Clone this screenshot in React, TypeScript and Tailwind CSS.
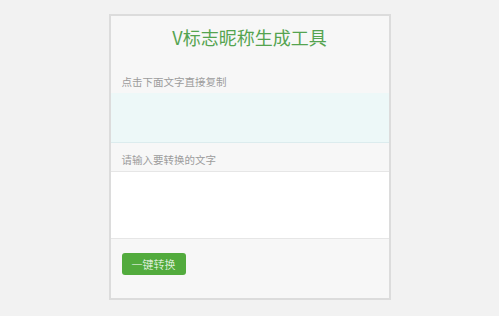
export default function App() {
  return (
    <div
      className="min-h-screen bg-[#f2f2f2] pt-[14px]"
      style={{ fontFamily: '"Noto Sans CJK SC", "Noto Sans", sans-serif' }}
    >
      <div className="mx-auto flex h-[286px] w-[282px] flex-col border-2 border-[#dcdcdc] bg-[#f7f7f7]">
        <div className="flex h-[42px] items-center justify-center text-[18px] leading-none text-[#55a450]">
          V标志昵称生成工具
        </div>
        <div className="flex h-[35px] items-end pb-[3px] pl-[11px] text-[10.5px] leading-[16px] text-[#9c9c9c]">
          点击下面文字直接复制
        </div>
        <div className="h-[50px] border-b border-[#dcecee] bg-[#edf8f8]" />
        <div className="h-[28px] pl-[11px] pt-[9px] text-[10.5px] leading-[16px] text-[#9c9c9c]">
          请输入要转换的文字
        </div>
        <div className="h-[68px] border-y border-[#e6e6e6] bg-white" />
        <div className="pl-[11px] pt-[14px]">
          <button className="flex h-[22px] w-[64px] items-center justify-center rounded-[3px] bg-[#52ab3d] text-[11px] font-light text-white">
            一键转换
          </button>
        </div>
      </div>
    </div>
  )
}
